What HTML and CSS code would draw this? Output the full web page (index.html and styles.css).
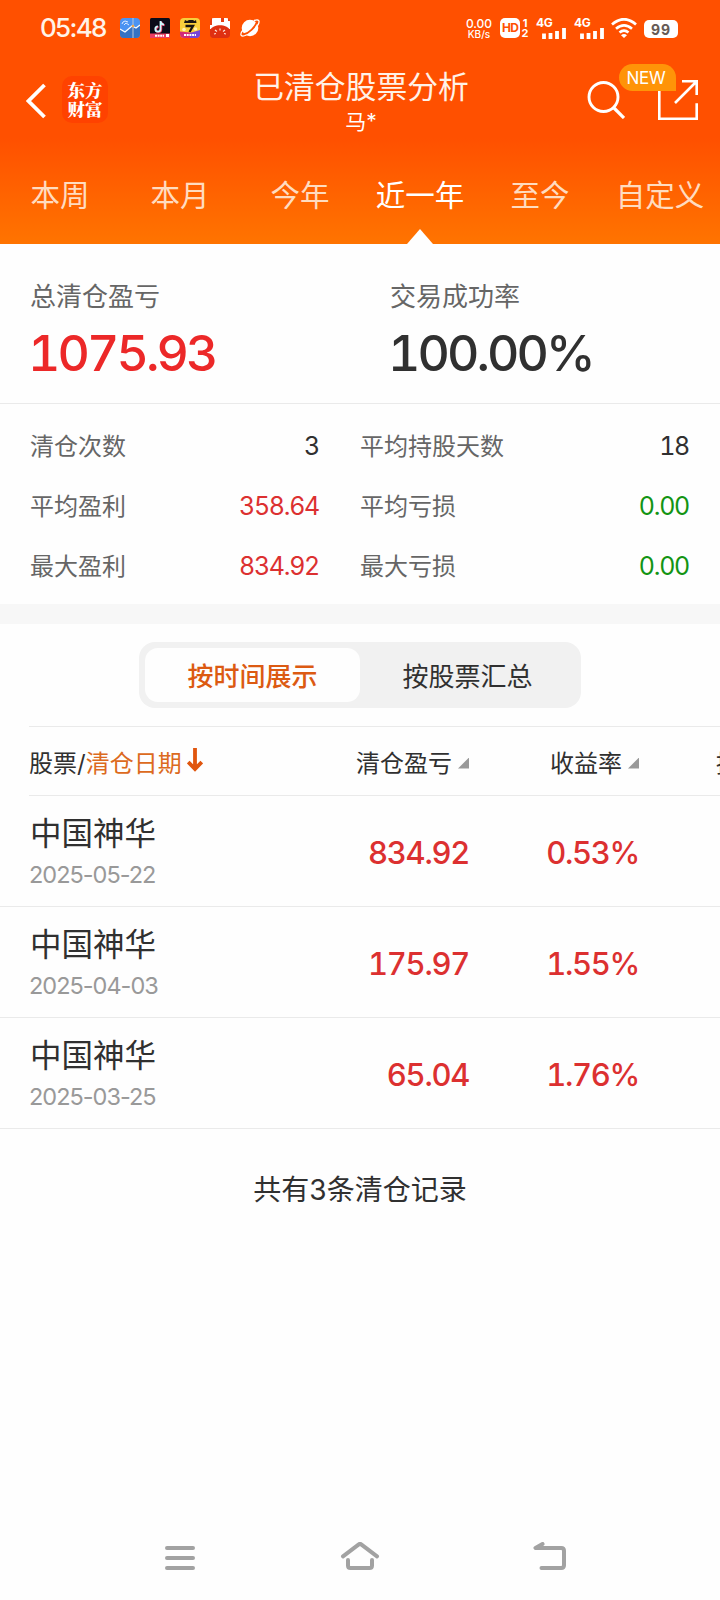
FILE: index.html
```html
<!DOCTYPE html>
<html lang="zh-CN">
<head>
<meta charset="utf-8">
<title>已清仓股票分析</title>
<link rel="stylesheet" href="styles.css">
</head>
<body>
<div class="screen">
  <header class="header">
    <div class="status">
      <span class="clock">05:48</span>
      <div class="apps">
        <svg class="app" viewBox="0 0 20 20"><defs><clipPath id="r"><rect width="20" height="20" rx="4"/></clipPath></defs><g clip-path="url(#r)"><rect width="20" height="20" fill="#4b93f2"/><path d="M0 11l5 3 7-6 4 2 4-3v13H0z" fill="#3672c4"/><path d="M0 11l5 3 7-6 4 2 4-3" fill="none" stroke="#fff" stroke-width="1.2"/><path d="M13 0v20" stroke="#b8c6da"/><circle cx="13" cy="8" r="1.3" fill="#f0a84a"/><path d="M2 6l1-2 2-1 3 1M4 7l2-2 3 2" fill="none" stroke="#dceaff"/></g></svg>
        <svg class="app" viewBox="0 0 20 20"><rect width="20" height="20" rx="1.500" fill="#0b0b18"/><path d="M10.500 3v8a2.600 2.600 0 1 1-2.600-2.600M10.500 3.500c.5 2 1.800 3 3.500 3.200" fill="none" stroke="#ef3c68" stroke-width="2" transform="translate(.7 .5)"/><path d="M10.500 3v8a2.600 2.600 0 1 1-2.600-2.600M10.500 3.500c.5 2 1.800 3 3.500 3.200" fill="none" stroke="#c9fbff" stroke-width="1.800"/><rect y="15.500" width="20" height="4.500" fill="#ed3d63"/><path d="M5 17.700h9" stroke="#fff" stroke-width="2" stroke-dasharray="2 .6"/><rect x="16" y="16" width="3" height="3" fill="#fff"/></svg>
        <svg class="app" viewBox="0 0 20 20"><g clip-path="url(#r)"><rect width="20" height="20" fill="#f8cf3c"/><path d="M4 5l1-3 2 1 2-1h4l1.500 1L16 2l.500 3z" fill="#181512"/><path d="M5.500 8H13L9.500 14" fill="none" stroke="#181512" stroke-width="2.300"/><circle cx="4" cy="11.500" r="1.800" fill="#fff0ad"/><circle cx="15.500" cy="11" r="1.800" fill="#fff0ad"/><path d="M0 13.500l20 2V20H0z" fill="#d32b78"/><path d="M10 15l10-3v8H10z" fill="#7845d8"/><path d="M4 17h12" stroke="#fff" stroke-width="2" stroke-dasharray="2 .7"/></g></svg>
        <svg class="app" viewBox="0 0 20 20"><g clip-path="url(#r)"><rect width="20" height="20" fill="#e83d12"/><path d="M2 0H11V4h3V0h4v3h2v8H0V7h2z" fill="#fff"/><path d="M0 20v-8C3 5.500 17 5.500 20 12v8z" fill="#df3011"/><path d="M5 12l2 1.500M10 10.500v2M15 12l-2 1.500M4 16l2-.5M16 16l-2-.5" stroke="#ffe6d8" stroke-width="1.200"/></g></svg>
        <svg class="app" viewBox="0 0 20 20"><circle cx="10" cy="10" r="8.300" fill="#fff"/><path d="M3.500 16.500C9 15.500 15.500 9 17 3.500" fill="none" stroke="#ff5000" stroke-width="1.800"/><path d="M14 2.600c5-2 6.500.5 3.500 5M3 12c-4 5-2 7.500 3.500 5" fill="none" stroke="#fff" stroke-width="1.300"/></svg>
      </div>
      <div class="speed"><span>0.00</span><span class="unit">KB/s</span></div>
      <div class="hd"><span class="hd-box">HD</span><span class="hd-nums"><i>1</i><i>2</i></span></div>
      <div class="signal"><span>4G</span><svg viewBox="0 0 24 12"><path d="M2 12V6.500M8.500 12V6M15 12V4M22 12V1" stroke="#fff" stroke-width="3.800"/></svg></div>
      <div class="signal second"><span>4G</span><svg viewBox="0 0 24 12"><path d="M2 12V6.500M8.500 12V6M15 12V4M22 12V1" stroke="#fff" stroke-width="3.800"/></svg></div>
      <svg class="wifi" viewBox="0 0 26 20"><path d="M1 6.500Q13-4 25 6.500M5 10.700q8-6.800 16 0M8.500 14.500q4.500-3.800 9 0" fill="none" stroke="#fff" stroke-width="2.700"/><path d="M10 17.200q3-2.200 6 0L13 20z" fill="#fff"/></svg>
      <div class="battery">99</div>
    </div>
    <div class="titlebar">
      <svg class="back" viewBox="0 0 20 36"><path d="M18.500 2L2.500 18l16 16" fill="none" stroke="#fff" stroke-width="3.800"/></svg>
      <div class="logo"><span>东方</span><span>财富</span></div>
      <div class="title"><h1>已清仓股票分析</h1><p>马*</p></div>
      <svg class="search" viewBox="0 0 38 38"><circle cx="16.500" cy="16" r="14.500" fill="none" stroke="#fff" stroke-width="2.900"/><path d="M26.500 26.500L37 37" stroke="#fff" stroke-width="3.200"/></svg>
      <div class="share">
        <svg viewBox="0 0 40 40"><path d="M1.300 8v30.700h37.400V23.300M24 1.300h14.700V15M38 2L17 23" fill="none" stroke="#fff" stroke-width="2.600"/></svg>
        <span class="new">NEW</span>
      </div>
    </div>
    <nav class="tabs"><span>本周</span><span>本月</span><span>今年</span><span class="active">近一年</span><span>至今</span><span>自定义</span></nav>
  </header>

  <section class="summary">
    <div><p>总清仓盈亏</p><strong class="red">1075.93</strong></div>
    <div><p>交易成功率</p><strong>100.00%</strong></div>
  </section>

  <section class="stats">
    <div class="stat"><span>清仓次数</span><b>3</b></div>
    <div class="stat"><span>平均持股天数</span><b>18</b></div>
    <div class="stat"><span>平均盈利</span><b class="gain">358.64</b></div>
    <div class="stat"><span>平均亏损</span><b class="loss">0.00</b></div>
    <div class="stat"><span>最大盈利</span><b class="gain">834.92</b></div>
    <div class="stat"><span>最大亏损</span><b class="loss">0.00</b></div>
  </section>

  <div class="segment"><span class="selected">按时间展示</span><span>按股票汇总</span></div>

  <section class="table">
    <div class="thead">
      <div class="c-name">股票/<em>清仓日期</em><svg class="down" viewBox="0 0 16 24"><path d="M8 0v20M1.200 14L8 21l6.800-7" fill="none" stroke="#e0560e" stroke-width="3.800"/></svg></div>
      <div class="c-profit">清仓盈亏<i class="tri"></i></div>
      <div class="c-rate">收益率<i class="tri"></i></div>
      <div class="c-days">持股天数</div>
    </div>
    <div class="row"><div class="c-name"><h2>中国神华</h2><time>2025-05-22</time></div><div class="c-profit">834.92</div><div class="c-rate">0.53%</div></div>
    <div class="row"><div class="c-name"><h2>中国神华</h2><time>2025-04-03</time></div><div class="c-profit">175.97</div><div class="c-rate">1.55%</div></div>
    <div class="row"><div class="c-name"><h2>中国神华</h2><time>2025-03-25</time></div><div class="c-profit">65.04</div><div class="c-rate">1.76%</div></div>
  </section>
  <p class="total">共有3条清仓记录</p>

  <footer class="sysnav">
    <svg viewBox="0 0 40 32"><path d="M7 6h26M7 16h26M7 26h26"/></svg>
    <svg viewBox="0 0 40 32"><path d="M3 14.300L18.800 2.300q1.200-.8 2.400 0L37 14.300M8 18v5.500q0 2.500 2.500 2.500h19q2.500 0 2.500-2.500V18"/></svg>
    <svg viewBox="0 0 40 32"><path d="M12.500 2L5.500 6H31.200q2.800 0 2.800 2.800v14.400q0 2.800-2.800 2.800H11.500"/></svg>
  </footer>
</div>
</body>
</html>
```

FILE: styles.css
```css
* { box-sizing: border-box; margin: 0; padding: 0; }
body { background: #fefefe; font-family: Inter, "Noto Sans CJK SC", sans-serif; color: #303030; }
i, em { font-style: normal; }
svg { display: block; flex: none; }
.screen { width: 720px; height: 1600px; overflow: hidden; display: flex; flex-direction: column; background: #fefefe; }

.header { height: 244px; flex: none; background: linear-gradient(#ff5000 0, #ff5000 138px, #ff7400 244px); color: #fff; }
.status { height: 56px; display: flex; align-items: center; padding-left: 40px; }
.clock { width: 80px; font-size: 26px; font-weight: 500; line-height: 56px; color: #fff3e8; white-space: nowrap; letter-spacing: -1.700px; }
.apps { display: flex; gap: 10px; width: 345px; }
.app { width: 20px; height: 20px; }
.speed { width: 28px; display: flex; flex-direction: column; align-items: center; font-size: 12px; font-weight: 500; line-height: 11px; }
.speed .unit { font-size: 10px; line-height: 10px; }
.hd { display: flex; margin-left: 7px; width: 36px; gap: 1px; }
.hd-box { width: 20px; height: 20px; border-radius: 5px; background: #fff; color: #ff5000; font-size: 12px; font-weight: 700; line-height: 20px; text-align: center; letter-spacing: -.8px; }
.hd-nums { display: flex; flex-direction: column; font-size: 11px; font-weight: 700; line-height: 10px; width: 8px; text-align: center; }
.signal { width: 31px; height: 21px; margin-right: 7px; display: flex; flex-direction: column; font-size: 12px; font-weight: 700; line-height: 10px; letter-spacing: -.3px; }
.signal svg { width: 24px; height: 12px; margin-left: 6px; margin-top: -1px; }
.second { margin-right: 6px; }
.wifi { width: 26px; height: 20px; }
.battery { width: 34px; height: 18px; margin-left: 7px; margin-top: 2px; border-radius: 5px; background: #fff; color: #665b55; font-size: 14px; font-weight: 700; line-height: 19px; letter-spacing: .8px; text-align: center; }

.titlebar { height: 94px; display: flex; padding: 20px 22px 0 26px; }
.back { width: 20px; height: 36px; margin-top: 7px; }
.logo { width: 46px; height: 47px; margin-left: 16px; border-radius: 10px; background: #ff4200; display: flex; flex-direction: column; align-items: center; font-family: "Noto Serif CJK SC", "Noto Sans CJK SC", sans-serif; font-weight: 900; font-size: 17.500px; line-height: 19px; padding-top: 4px; }
.title { flex: 1; display: flex; flex-direction: column; align-items: center; margin-top: -11px; padding-left: 27px; }
.title h1 { font-size: 30.800px; font-weight: 400; line-height: 44px; color: #fff2e8; white-space: nowrap; }
.title p { font-size: 21px; line-height: 25px; }
.search { width: 38px; height: 38px; margin-top: 5px; }
.share { position: relative; width: 40px; height: 40px; margin: 4px 0 0 33px; flex: none; }
.new { position: absolute; right: 22px; top: -16px; width: 57px; height: 27px; border-radius: 14px 14px 0 14px; background: #ff9408; font-size: 17px; line-height: 28px; text-align: center; padding-right: 3px; letter-spacing: -.2px; }
.tabs { height: 94px; display: flex; font-size: 29.500px; line-height: 91px; color: #ffdcc0; }
.tabs span { flex: 1; display: flex; justify-content: center; position: relative; white-space: nowrap; }
.tabs .active { color: #fff; }
.tabs .active::after { content: ""; position: absolute; bottom: 0; left: 47px; border: solid transparent; border-width: 0 13px 15px; border-bottom-color: #fefefe; }

.summary { height: 160px; flex: none; display: grid; grid-template-columns: 360px 330px; border-bottom: 1px solid #eaeaea; padding: 34px 0 0 30px; }
.summary p { font-size: 26px; line-height: 38px; color: #666; }
.summary strong { display: block; font-size: 50px; font-weight: 500; line-height: 60px; margin: 7px 0 0 -2px; font-variant-numeric: tabular-nums; letter-spacing: -2.900px; }
.summary .red { color: #ec2828; }
.stats { height: 220px; flex: none; display: grid; grid-template-columns: 290px 330px; column-gap: 40px; grid-auto-rows: 60px; padding: 12px 30px 0; border-bottom: 20px solid #f7f7f7; }
.stat { display: flex; justify-content: space-between; align-items: center; font-size: 24px; color: #666; }
.stat span { padding-bottom: 3px; }
.stat b { font-size: 25px; font-weight: 400; font-variant-numeric: tabular-nums; letter-spacing: -1.300px; padding-right: 1px; color: #303030; }
.stat .gain { color: #dc3030; }
.stat .loss { color: #139413; }

.segment { width: 442px; height: 66px; flex: none; margin: 18px 0 18px 139px; padding: 6px; border-radius: 16px; background: #f1f1f1; display: grid; grid-template-columns: 1fr 1fr; font-size: 26px; line-height: 57px; text-align: center; }
.segment span { height: 54px; }
.selected { border-radius: 13px; background: #fefefe; color: #dc5a12; font-weight: 500; }

.table { flex: none; }
.thead { height: 70px; width: 691px; margin-left: 29px; border: solid #eaeaea; border-width: 1px 0; display: flex; align-items: center; font-size: 24px; overflow: hidden; white-space: nowrap; }
.thead > div, .row > div { flex: none; }
.thead .c-name { width: 300px; display: flex; align-items: center; }
.thead em { color: #dc6a20; }
.down { width: 16px; height: 24px; margin: -2px 0 0 5px; }
.c-profit { width: 140px; }
.thead .c-profit, .thead .c-rate { display: flex; justify-content: flex-end; align-items: center; }
.c-rate { width: 170px; }
.tri { width: 11px; height: 11px; margin: 4px 0 0 6px; background: #999; clip-path: polygon(100% 0, 100% 100%, 0 100%); }
.c-days { margin-left: 77px; }
.row { height: 111px; display: flex; align-items: center; padding-left: 30px; border-bottom: 1px solid #eaeaea; }
.row .c-name { width: 299px; }
.row h2 { font-size: 31.500px; font-weight: 400; line-height: 44px; }
.row time { display: block; font-size: 23.500px; line-height: 30px; color: #999; margin: 4px 0 0 -1px; letter-spacing: -1px; }
.row .c-profit, .row .c-rate { font-size: 31px; font-weight: 500; text-align: right; color: #dc3030; padding-top: 3px; font-variant-numeric: tabular-nums; letter-spacing: -1.300px; }
.total { font-size: 28px; line-height: 40px; margin-top: 41px; text-align: center; }

.sysnav { margin-top: auto; height: 72px; flex: none; display: flex; justify-content: center; gap: 140px; padding-top: 14px; }
.sysnav svg { width: 40px; height: 32px; fill: none; stroke: #a2a2a2; stroke-width: 4; stroke-linecap: round; stroke-linejoin: round; }
.sysnav svg:last-child { margin-right: -10px; margin-left: 10px; }
```
